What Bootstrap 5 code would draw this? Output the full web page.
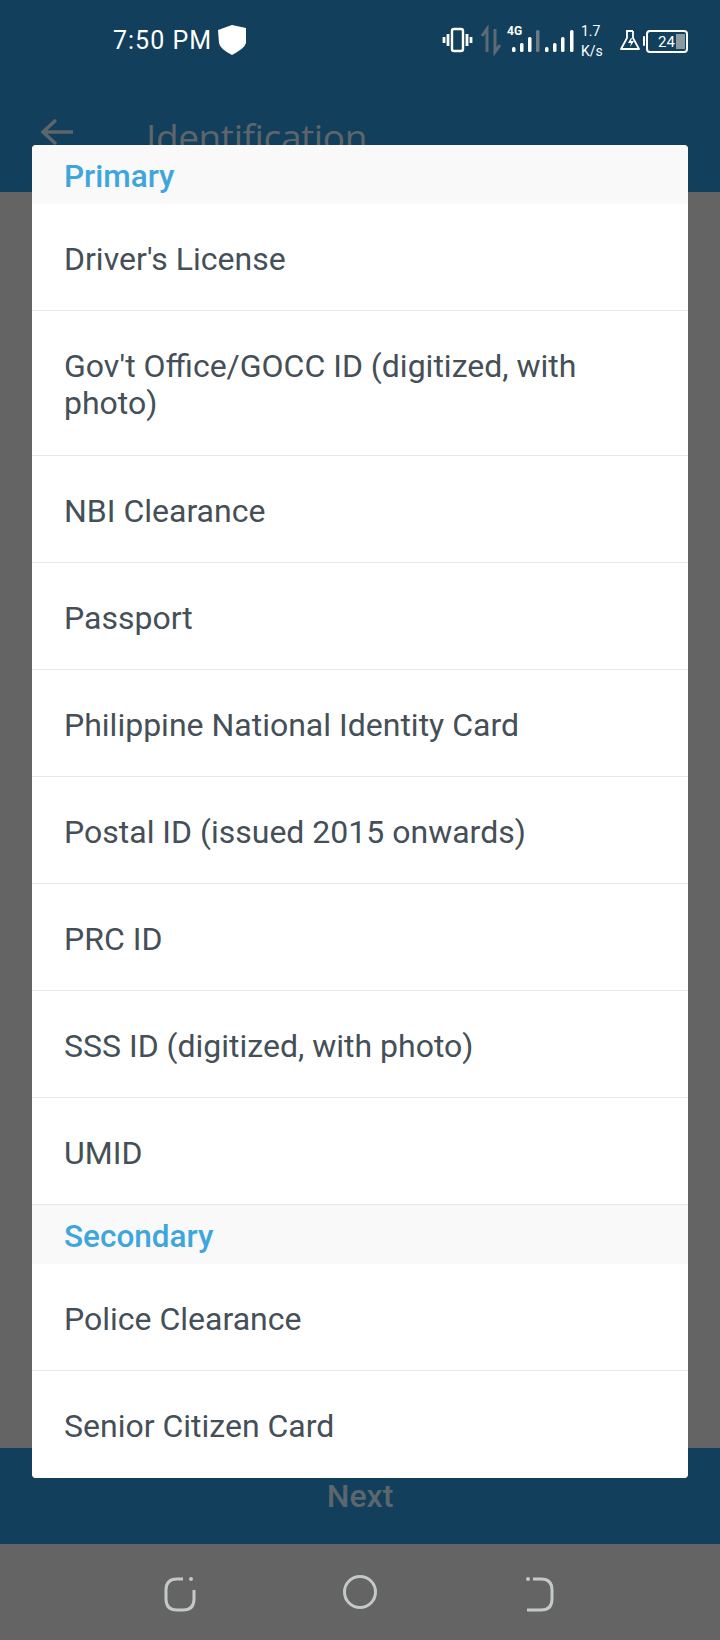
<!DOCTYPE html>
<html lang="en">
<head>
    <meta charset="UTF-8">
    <meta name="viewport" content="width=device-width, initial-scale=1.0">
    <title>Identification</title>
    <link href="https://cdn.jsdelivr.net/npm/bootstrap@5.3.0/dist/css/bootstrap.min.css" rel="stylesheet">
    <style>
        body { width: 720px; height: 1640px; overflow: hidden; font-family: Roboto, sans-serif; background: #646464; }
        .screen { height: 1640px; }
        .app-top { height: 192px; background: #123f5c; }
        .status-row { height: 80px; padding-left: 113px; padding-right: 20px; }
        .clock { color: #fff; font-size: 25px; line-height: 1; letter-spacing: 1px; margin-right: 0; }
        .title-row { height: 112px; padding-left: 40px; padding-top: 38px; }
        .page-title { color: #5e666b; font-size: 37px; line-height: 1; margin-left: 72px; font-family: "Open Sans", sans-serif; letter-spacing: -.4px; }
        .backdrop-area { background: #646464; }
        .next-bar { height: 96px; background: #123f5c; color: #5b666d; font-size: 32px; font-weight: 500; padding-top: 30px; line-height: 37px; }
        .nav-keys { height: 96px; background: #646464; }
        .nav-keys svg { display: block; }
        .picker { position: absolute; left: 32px; top: 145px; width: 656px; height: 1333px; border-radius: 4px; overflow: hidden; border: 0; }
        .picker-head { height: 59px; background: #f9f9fa; color: #3ea6dd; font-size: 31.5px; font-weight: 500; padding: 13px 0 0 32px; line-height: 37px; border: 0; }
        .picker-item { min-height: 107px; padding: 37px 32px 0; font-size: 32px; line-height: 37px; color: #454f57; border-color: #e6e8ea; border-width: 0 0 1px; }
        .picker-item.two-line { min-height: 145px; padding-right: 90px; }
        .picker-item.end-item { border-bottom: 0; }
    </style>
</head>
<body>
<div class="screen d-flex flex-column position-relative">
    <div class="app-top">
        <div class="status-row d-flex align-items-center">
            <span class="clock">7:50 PM</span>
            <svg width="32" height="32" viewBox="0 0 32 32" class="ms-1"><path d="M2 6 L16 1 L30 4 L30 19 Q29 24 16 31 Q4 25 3 19 Z" fill="#fff"/></svg>
            <svg class="ms-auto" width="260" height="44" viewBox="0 0 260 44">
                <g fill="none" stroke="#fff" stroke-width="2.4">
                    <rect x="12" y="11" width="11" height="22" rx="2"/>
                    <path d="M8 16v12M27 16v12M4 19v6M31 19v6" stroke-width="2.8"/>
                </g>
                <g stroke="#5d6b74" stroke-width="3" fill="none">
                    <path d="M47 34V11l-5 7M55 11v23l5-7"/>
                </g>
                <text x="67" y="17" fill="#fff" font-family="Roboto, sans-serif" font-size="12" font-weight="700">4G</text>
                <g fill="#fff">
                    <rect x="72" y="29" width="3.5" height="5" rx="1.5"/>
                    <rect x="80" y="25" width="3.5" height="9" rx="1.5"/>
                    <rect x="88" y="19" width="3.5" height="15" rx="1.5"/>
                    <rect x="105" y="29" width="3.5" height="5" rx="1.5"/>
                    <rect x="113" y="25" width="3.5" height="9" rx="1.5"/>
                    <rect x="121" y="19" width="3.5" height="15" rx="1.5"/>
                    <rect x="130" y="12" width="3.5" height="22" rx="1.5"/>
                </g>
                <rect x="96" y="12" width="3.5" height="22" rx="1.5" fill="#6d7c85"/>
                <text x="141" y="18" fill="#fff" font-family="Roboto, sans-serif" font-size="14">1.7</text>
                <text x="141" y="38" fill="#fff" font-family="Roboto, sans-serif" font-size="14">K/s</text>
                <path d="M186 13h7M187 13v7l-6 11h18l-6-11v-7" fill="none" stroke="#fff" stroke-width="1.8" stroke-linejoin="round"/>
                <path d="M191 20l-3 5h3l-1 4 4-6h-3l1-3z" fill="#fff"/>
                <rect x="203" y="18" width="2" height="10" rx="1" fill="#fff"/>
                <rect x="207" y="13" width="40" height="21" rx="3" fill="none" stroke="#fff" stroke-width="2"/>
                <text x="218" y="29" fill="#fff" font-family="Roboto, sans-serif" font-size="15">24</text>
                <rect x="236" y="16" width="9" height="15" fill="#8a9aa3"/>
            </svg>
        </div>
        <div class="title-row d-flex align-items-start">
            <svg width="34" height="28" viewBox="0 0 34 28"><path d="M33 14H3M16 2L3 14l13 12" fill="none" stroke="#5e666b" stroke-width="3.4"/></svg>
            <span class="page-title">Identification</span>
        </div>
    </div>
    <div class="backdrop-area flex-grow-1"></div>
    <div class="next-bar text-center">Next</div>
    <div class="nav-keys d-flex justify-content-center align-items-center">
        <svg width="720" height="96" viewBox="0 0 720 96">
            <g fill="none" stroke="#c3c8ca" stroke-width="3">
                <path d="M183 35h-6q-11 0-11 11v9q0 11 11 11h6q11 0 11-11v-9"/>
                <circle cx="360" cy="48" r="15.5"/>
                <path d="M533 35h8q11 0 11 11v9q0 11-11 11h-14"/>
            </g>
            <circle cx="191" cy="35" r="2" fill="#c3c8ca"/>
            <circle cx="528" cy="35" r="2" fill="#c3c8ca"/>
        </svg>
    </div>
    <div class="picker list-group list-group-flush bg-white">
        <div class="list-group-item picker-head">Primary</div>
        <div class="list-group-item picker-item">Driver's License</div>
        <div class="list-group-item picker-item two-line">Gov't Office/GOCC ID (digitized, with photo)</div>
        <div class="list-group-item picker-item">NBI Clearance</div>
        <div class="list-group-item picker-item">Passport</div>
        <div class="list-group-item picker-item">Philippine National Identity Card</div>
        <div class="list-group-item picker-item">Postal ID (issued 2015 onwards)</div>
        <div class="list-group-item picker-item">PRC ID</div>
        <div class="list-group-item picker-item">SSS ID (digitized, with photo)</div>
        <div class="list-group-item picker-item">UMID</div>
        <div class="list-group-item picker-head">Secondary</div>
        <div class="list-group-item picker-item">Police Clearance</div>
        <div class="list-group-item picker-item end-item">Senior Citizen Card</div>
    </div>
</div>
<script src="https://cdn.jsdelivr.net/npm/bootstrap@5.3.0/dist/js/bootstrap.bundle.min.js"></script>
</body>
</html>
